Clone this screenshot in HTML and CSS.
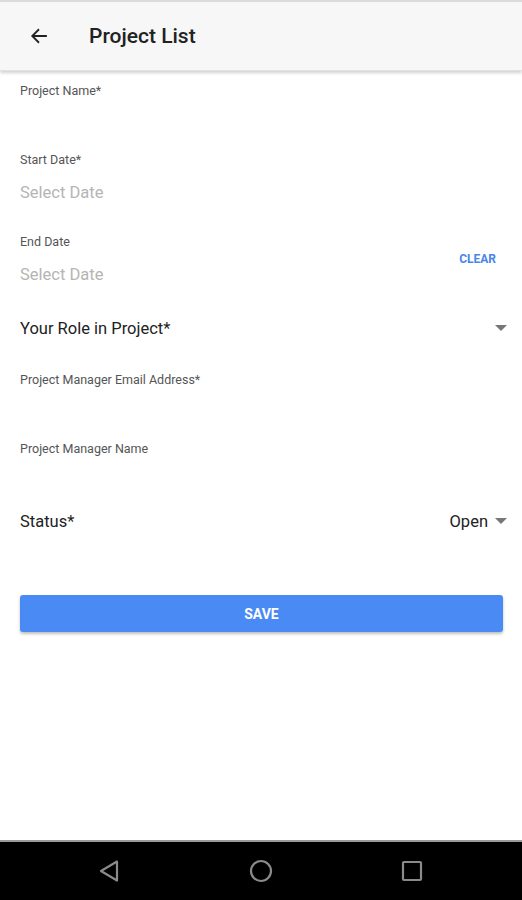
FILE: index.html
```html
<!DOCTYPE html>
<html lang="en">
<head>
  <meta charset="UTF-8" />
  <title>Project List</title>
  <link rel="stylesheet" href="styles.css">
</head>
<body>

  <div class="status-strip"></div>
  <header class="app-bar">
    <svg class="back" width="18" height="18" viewBox="0 0 16 16">
      <path d="M15 8H2M8 2L2 8l6 6" fill="none" stroke="#222" stroke-width="1.6"/>
    </svg>
    <h1>Project List</h1>
  </header>

  <main class="form">
    <div class="field">
      <label>Project Name*</label>
    </div>

    <div class="field date">
      <label>Start Date*</label>
      <div class="placeholder">Select Date</div>
    </div>

    <div class="field date end">
      <div>
        <label>End Date</label>
        <div class="placeholder">Select Date</div>
      </div>
      <span class="clear">CLEAR</span>
    </div>

    <div class="select role">
      <span>Your Role in Project*</span>
      <span class="caret"></span>
    </div>

    <div class="field">
      <label>Project Manager Email Address*</label>
    </div>

    <div class="field">
      <label>Project Manager Name</label>
    </div>

    <div class="select status">
      <span>Status*</span>
      <span class="value">Open <span class="caret"></span></span>
    </div>

    <button class="save">SAVE</button>
  </main>

  <nav class="nav-bar">
    <svg width="24" height="24" viewBox="0 0 24 24">
      <path d="M19 2.5L3 12l16 9.5z" fill="none" stroke="#8a8a8a" stroke-width="2.2" stroke-linejoin="round"/>
    </svg>
    <svg width="24" height="24" viewBox="0 0 24 24">
      <circle cx="12" cy="12" r="10" fill="none" stroke="#8a8a8a" stroke-width="2.2"/>
    </svg>
    <svg width="24" height="24" viewBox="0 0 24 24">
      <rect x="3" y="3" width="18" height="18" rx="1" fill="none" stroke="#8a8a8a" stroke-width="2.2"/>
    </svg>
  </nav>

</body>
</html>
```

FILE: styles.css
```css
body {
  margin: 0;
  height: 900px;
  background: #fff;
  font-family: Roboto, 'Noto Sans', sans-serif;
  display: flex;
  flex-direction: column;
  overflow: hidden;
}

.status-strip {
  height: 2px;
  background: #dcdcdc;
}

.app-bar {
  height: 68px;
  background: #f7f7f7;
  display: flex;
  align-items: center;
  padding-left: 30px;
  box-shadow: 0 2px 3px rgba(0, 0, 0, 0.18);
  border-bottom: 1px solid #e2e2e2;
  position: relative;
  z-index: 1;
}

.back {
  margin-right: 41px;
}

.app-bar h1 {
  margin: 0;
  font-size: 21px;
  font-weight: 500;
  color: #222;
}

.form {
  flex: 1;
  padding: 0 15px 0 20px;
  display: flex;
  flex-direction: column;
}

.field {
  height: 69px;
  padding-top: 12px;
  box-sizing: border-box;
}

.field label {
  display: block;
  font-size: 12.5px;
  color: #555;
}

.field.date {
  height: 82px;
  padding-top: 12px;
}

.placeholder {
  margin-top: 16px;
  font-size: 16.5px;
  color: #b5b5b5;
}

.field.end {
  display: flex;
  justify-content: space-between;
  align-items: flex-start;
  height: 70px;
  padding-top: 12px;
}

.clear {
  margin-top: 18px;
  margin-right: 11px;
  font-size: 12px;
  font-weight: bold;
  color: #4a86e8;
}

.select {
  display: flex;
  justify-content: space-between;
  align-items: center;
  font-size: 16.5px;
  color: #222;
  height: 36px;
}

.role {
  margin-top: 18px;
  margin-bottom: 14px;
}

.status {
  margin-top: 5px;
  height: 36px;
}

.value {
  display: flex;
  align-items: center;
  gap: 7px;
}

.caret {
  width: 0;
  height: 0;
  border-left: 6px solid transparent;
  border-right: 6px solid transparent;
  border-top: 6px solid #777;
}

.save {
  margin-top: 56px;
  height: 37px;
  background: #4a8af4;
  color: #fff;
  border: none;
  border-radius: 3px;
  font-family: Roboto, sans-serif;
  font-size: 14px;
  font-weight: bold;
  box-shadow: 0 2px 3px rgba(0, 0, 0, 0.25);
  margin-right: 4px;
}

.nav-bar {
  height: 58px;
  background: #000;
  border-top: 2px solid #9a9a9a;
  display: flex;
  justify-content: center;
  align-items: center;
  gap: 127px;
}
```
